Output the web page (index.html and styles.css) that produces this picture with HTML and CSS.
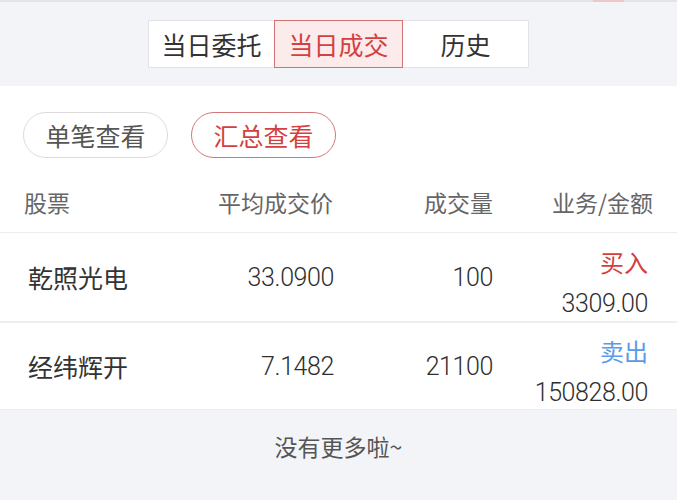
FILE: index.html
```html
<!DOCTYPE html>
<html lang="zh-CN">
<head>
<meta charset="utf-8">
<link rel="stylesheet" href="styles.css">
</head>
<body>
<div class="top">
  <div class="topline"><span class="mark"></span></div>
  <div class="seg">
    <div class="seg-item">当日委托</div>
    <div class="seg-item active">当日成交</div>
    <div class="seg-item">历史</div>
  </div>
</div>
<div class="content">
  <div class="pills">
    <div class="pill">单笔查看</div>
    <div class="pill active">汇总查看</div>
  </div>
  <div class="thead">
    <div class="c1">股票</div>
    <div class="r">平均成交价</div>
    <div class="r">成交量</div>
    <div class="r">业务/金额</div>
  </div>
  <div class="row">
    <div class="name">乾照光电</div>
    <div class="r num">33.0900</div>
    <div class="r num">100</div>
    <div class="amt">
      <div class="side buy">买入</div>
      <div class="num">3309.00</div>
    </div>
  </div>
  <div class="row last">
    <div class="name">经纬辉开</div>
    <div class="r num">7.1482</div>
    <div class="r num">21100</div>
    <div class="amt">
      <div class="side sell">卖出</div>
      <div class="num">150828.00</div>
    </div>
  </div>
</div>
<div class="footer">没有更多啦~</div>
</body>
</html>
```

FILE: styles.css
```css
* { box-sizing: border-box; }
html, body { margin: 0; padding: 0; }
body {
  width: 677px;
  height: 500px;
  overflow: hidden;
  background: #f3f4f8;
  font-family: "Noto Sans CJK SC", "Noto Sans", sans-serif;
  color: #333;
}
.top {
  height: 86px;
  background: #f3f4f8;
  display: flex;
  flex-direction: column;
  align-items: center;
}
.topline {
  width: 100%;
  height: 2px;
  background: #e3e4ea;
  position: relative;
}
.mark {
  position: absolute;
  left: 593px;
  top: 0;
  width: 31px;
  height: 2px;
  background: #f1c6c6;
}
.seg {
  margin-top: 18px;
  display: flex;
  height: 48px;
  background: #fff;
  border: 1px solid #e2e3e8;
}
.seg-item {
  width: 125px;
  display: flex;
  align-items: center;
  justify-content: center;
  font-size: 25px;
  color: #333;
  line-height: 1;
}
.seg-item.active {
  width: 129px;
  margin: -1px 0;
  background: #fbebeb;
  border: 1px solid #d27272;
  color: #d43f3f;
}
.content {
  background: #fff;
  height: 324px;
}
.pills {
  display: flex;
  gap: 23px;
  padding: 26px 0 0 23px;
  height: 72px;
}
.pill {
  width: 145px;
  height: 46px;
  border: 1px solid #dcdcdc;
  border-radius: 23px;
  display: flex;
  align-items: center;
  justify-content: center;
  font-size: 25px;
  color: #555;
  line-height: 1;
}
.pill.active {
  border-color: #d27878;
  color: #d43f3f;
}
.thead {
  display: grid;
  grid-template-columns: 154px 155px 160px 160px;
  padding-left: 24px;
  padding-top: 14px;
  height: 75px;
  align-items: center;
  font-size: 23px;
  color: #666;
  line-height: 1;
  border-bottom: 1px solid #ececec;
}
.r { text-align: right; }
.row {
  display: grid;
  grid-template-columns: 150px 156px 159px 155px;
  padding-left: 28px;
  height: 90px;
  align-items: center;
  border-bottom: 2px solid #eeeef1;
  font-size: 24px;
  color: #333;
}
.row.last { height: 87px; border-bottom: 1px solid #ececf0; }
.name {
  font-size: 25px;
  line-height: 1;
}
.num {
  font-family: "Roboto", "DejaVu Sans", sans-serif;
  font-weight: 300;
  font-size: 25px;
  letter-spacing: -0.4px;
  line-height: 1;
  color: #2e2e2e;
}
.amt {
  text-align: right;
  display: flex;
  flex-direction: column;
  align-items: flex-end;
  gap: 17px;
  padding-top: 12px;
}
.side {
  font-size: 24px;
  line-height: 1;
}
.buy { color: #d43f3f; }
.sell { color: #5a9ae8; }
.footer {
  text-align: center;
  font-size: 23px;
  color: #555;
  padding-top: 25px;
  line-height: 1;
}
```
